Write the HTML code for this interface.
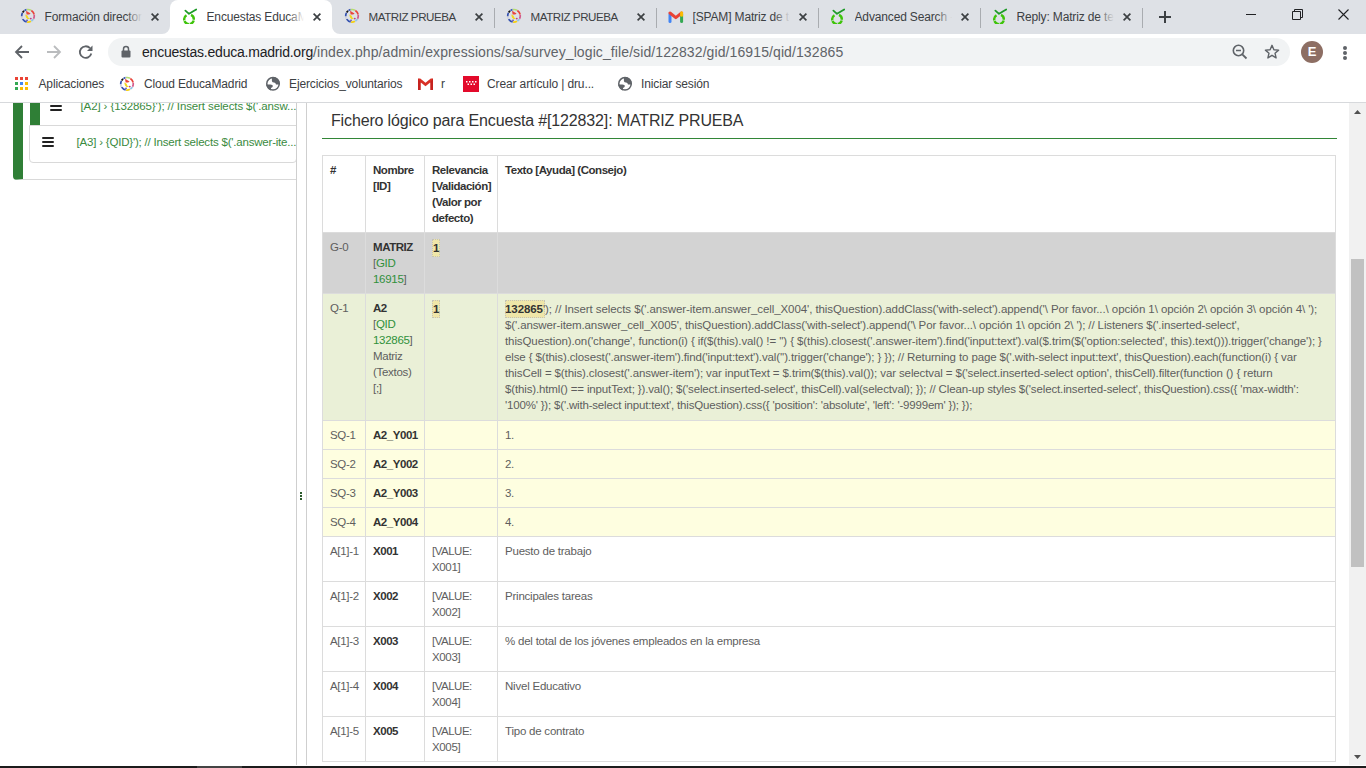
<!DOCTYPE html>
<html><head><meta charset="utf-8">
<style>
*{box-sizing:border-box}
html,body{margin:0;padding:0;width:1366px;height:768px;overflow:hidden;background:#fff;font-family:"Liberation Sans",sans-serif}
.abs{position:absolute}
#tabstrip{position:absolute;left:0;top:0;width:1366px;height:34px;background:#dee1e6}
.tab{position:absolute;top:0;height:34px;width:162px}
.tabt{font-size:12px;color:#3c4043;white-space:nowrap;overflow:hidden}
.tab .t{position:absolute;left:36px;top:10px;font-size:12px;color:#3c4043;white-space:nowrap;overflow:hidden;width:88px}
.tab .x{position:absolute;left:138px;top:11px;width:12px;height:12px}
.tab .fav{position:absolute;left:12px;top:8px;width:16px;height:16px}
.sep{position:absolute;top:8px;width:1px;height:20px;background:#a9acb0}
#active{position:absolute;left:170px;top:0;width:162px;height:34px;background:#fff;border-radius:8px 8px 0 0}
#toolbar{position:absolute;left:0;top:34px;width:1366px;height:68px;background:#fff}
#omni{position:absolute;left:108px;top:38px;width:1182px;height:28px;border-radius:14px;background:#f1f3f4}
#url{position:absolute;left:142px;top:44px;font-size:14px;color:#5f6368;white-space:nowrap}
#url b{font-weight:normal;color:#202124}
.bm{position:absolute;top:77px;font-size:12px;letter-spacing:-0.12px;color:#3c4043;white-space:nowrap}
#chromeline{position:absolute;left:0;top:102px;width:1366px;height:1px;background:#d7d9dc}
#page{position:absolute;left:0;top:103px;width:1350px;height:662px;background:#fff;overflow:hidden;font-family:"Liberation Sans",sans-serif}
#scroll{position:absolute;left:1349px;top:103px;width:17px;height:662px;background:#f1f1f1}
#thumb{position:absolute;left:1351px;top:259px;width:13px;height:308px;background:#c1c1c1}
#taskbar{position:absolute;left:0;top:766px;width:1366px;height:2px;background:#1c1c1c}
.tx{position:absolute;white-space:nowrap;line-height:16px;font-family:"Liberation Sans",sans-serif}
.g{color:#30903b}
.tx b{color:#333}
</style></head><body>
<div id="tabstrip"></div>
<div id="active"></div>
<svg class="abs" style="left:162px;top:26px" width="8" height="8" viewBox="0 0 8 8"><path d="M0 8 A8 8 0 0 0 8 0 L8 8 Z" fill="#fff"/></svg>
<svg class="abs" style="left:332px;top:26px" width="8" height="8" viewBox="0 0 8 8"><path d="M8 8 A8 8 0 0 1 0 0 L0 8 Z" fill="#fff"/></svg>
<svg class="abs" style="left:20px;top:8px" width="16" height="16" viewBox="0 0 16 16"><path d="M6.91 1.60 A6.3 6.3 0 0 1 10.96 2.24" fill="none" stroke="#b5dc70" stroke-width="1.7"/><path d="M11.34 2.46 A6.3 6.3 0 0 1 14.16 6.49" fill="none" stroke="#e8453c" stroke-width="1.7"/><path d="M14.24 6.92 A6.3 6.3 0 0 1 13.56 10.76" fill="none" stroke="#d25a8c" stroke-width="1.7"/><path d="M13.34 11.14 A6.3 6.3 0 0 1 11.34 13.14" fill="none" stroke="#8cc6e6" stroke-width="1.7"/><path d="M10.96 13.36 A6.3 6.3 0 0 1 7.12 14.04" fill="none" stroke="#f5cf10" stroke-width="1.7"/><path d="M6.69 13.96 A6.3 6.3 0 0 1 2.66 11.14" fill="none" stroke="#3552b0" stroke-width="1.7"/><path d="M2.44 10.76 A6.3 6.3 0 0 1 1.76 8.68" fill="none" stroke="#cfd0dc" stroke-width="1.7"/><path d="M1.72 8.24 A6.3 6.3 0 0 1 2.44 4.84" fill="none" stroke="#3552b0" stroke-width="1.7"/><path d="M2.66 4.46 A6.3 6.3 0 0 1 4.12 2.84" fill="none" stroke="#141414" stroke-width="1.7"/><path d="M4.48 2.58 A6.3 6.3 0 0 1 6.48 1.69" fill="none" stroke="#3552b0" stroke-width="1.7"/>
 <path d="M6 2.8 L10.6 5.6 L9.2 6.4 L6.6 6.6 Z" fill="#e8453c"/>
 <path d="M5.2 6.6 L7.4 7.4 L8.6 10 L10.4 10.4 L7.6 11.2 L6 9.6 Z" fill="#f2d820"/>
 <circle cx="10.8" cy="10.6" r="0.9" fill="#b04090"/>
 <circle cx="7" cy="12.4" r="0.8" fill="#6040a0"/>
</svg>
<div class="abs tabt" style="left:44.5px;top:10px;width:98px;letter-spacing:-0.15px">Formación directora</div>
<div class="abs" style="left:126px;top:6px;width:17px;height:22px;background:linear-gradient(90deg,rgba(222,225,230,0),#dee1e6 95%)"></div>
<svg class="abs" style="left:151px;top:13px" width="8" height="8" viewBox="0 0 8 8"><path d="M0.6 0.6L7.4 7.4M7.4 0.6L0.6 7.4" stroke="#3c4043" stroke-width="1.7"/></svg>
<svg class="abs" style="left:181px;top:8px" width="16" height="16" viewBox="0 0 16 16">
 <path d="M10.03 6.95 A4.8 4.8 0 1 1 5.97 6.95" fill="none" stroke="#3ec40a" stroke-width="2.4" stroke-dasharray="5.6 0.7"/>
 <path d="M4.4 2.6 L8 5.8 L15.2 1.4" fill="none" stroke="#1e9a28" stroke-width="1.8" stroke-linecap="round" stroke-linejoin="round"/>
</svg>
<div class="abs tabt" style="left:206.5px;top:10px;width:98px;letter-spacing:-0.15px">Encuestas EducaMadrid</div>
<div class="abs" style="left:288px;top:6px;width:17px;height:22px;background:linear-gradient(90deg,rgba(255,255,255,0),#fff 95%)"></div>
<svg class="abs" style="left:313px;top:13px" width="8" height="8" viewBox="0 0 8 8"><path d="M0.6 0.6L7.4 7.4M7.4 0.6L0.6 7.4" stroke="#3c4043" stroke-width="1.7"/></svg>
<svg class="abs" style="left:344px;top:8px" width="16" height="16" viewBox="0 0 16 16"><path d="M6.91 1.60 A6.3 6.3 0 0 1 10.96 2.24" fill="none" stroke="#b5dc70" stroke-width="1.7"/><path d="M11.34 2.46 A6.3 6.3 0 0 1 14.16 6.49" fill="none" stroke="#e8453c" stroke-width="1.7"/><path d="M14.24 6.92 A6.3 6.3 0 0 1 13.56 10.76" fill="none" stroke="#d25a8c" stroke-width="1.7"/><path d="M13.34 11.14 A6.3 6.3 0 0 1 11.34 13.14" fill="none" stroke="#8cc6e6" stroke-width="1.7"/><path d="M10.96 13.36 A6.3 6.3 0 0 1 7.12 14.04" fill="none" stroke="#f5cf10" stroke-width="1.7"/><path d="M6.69 13.96 A6.3 6.3 0 0 1 2.66 11.14" fill="none" stroke="#3552b0" stroke-width="1.7"/><path d="M2.44 10.76 A6.3 6.3 0 0 1 1.76 8.68" fill="none" stroke="#cfd0dc" stroke-width="1.7"/><path d="M1.72 8.24 A6.3 6.3 0 0 1 2.44 4.84" fill="none" stroke="#3552b0" stroke-width="1.7"/><path d="M2.66 4.46 A6.3 6.3 0 0 1 4.12 2.84" fill="none" stroke="#141414" stroke-width="1.7"/><path d="M4.48 2.58 A6.3 6.3 0 0 1 6.48 1.69" fill="none" stroke="#3552b0" stroke-width="1.7"/>
 <path d="M6 2.8 L10.6 5.6 L9.2 6.4 L6.6 6.6 Z" fill="#e8453c"/>
 <path d="M5.2 6.6 L7.4 7.4 L8.6 10 L10.4 10.4 L7.6 11.2 L6 9.6 Z" fill="#f2d820"/>
 <circle cx="10.8" cy="10.6" r="0.9" fill="#b04090"/>
 <circle cx="7" cy="12.4" r="0.8" fill="#6040a0"/>
</svg>
<div class="abs tabt" style="left:368.5px;top:10px;width:98px;font-size:11.6px;letter-spacing:-0.45px">MATRIZ PRUEBA</div>
<svg class="abs" style="left:475px;top:13px" width="8" height="8" viewBox="0 0 8 8"><path d="M0.6 0.6L7.4 7.4M7.4 0.6L0.6 7.4" stroke="#3c4043" stroke-width="1.7"/></svg>
<div class="sep" style="left:494px"></div>
<svg class="abs" style="left:506px;top:8px" width="16" height="16" viewBox="0 0 16 16"><path d="M6.91 1.60 A6.3 6.3 0 0 1 10.96 2.24" fill="none" stroke="#b5dc70" stroke-width="1.7"/><path d="M11.34 2.46 A6.3 6.3 0 0 1 14.16 6.49" fill="none" stroke="#e8453c" stroke-width="1.7"/><path d="M14.24 6.92 A6.3 6.3 0 0 1 13.56 10.76" fill="none" stroke="#d25a8c" stroke-width="1.7"/><path d="M13.34 11.14 A6.3 6.3 0 0 1 11.34 13.14" fill="none" stroke="#8cc6e6" stroke-width="1.7"/><path d="M10.96 13.36 A6.3 6.3 0 0 1 7.12 14.04" fill="none" stroke="#f5cf10" stroke-width="1.7"/><path d="M6.69 13.96 A6.3 6.3 0 0 1 2.66 11.14" fill="none" stroke="#3552b0" stroke-width="1.7"/><path d="M2.44 10.76 A6.3 6.3 0 0 1 1.76 8.68" fill="none" stroke="#cfd0dc" stroke-width="1.7"/><path d="M1.72 8.24 A6.3 6.3 0 0 1 2.44 4.84" fill="none" stroke="#3552b0" stroke-width="1.7"/><path d="M2.66 4.46 A6.3 6.3 0 0 1 4.12 2.84" fill="none" stroke="#141414" stroke-width="1.7"/><path d="M4.48 2.58 A6.3 6.3 0 0 1 6.48 1.69" fill="none" stroke="#3552b0" stroke-width="1.7"/>
 <path d="M6 2.8 L10.6 5.6 L9.2 6.4 L6.6 6.6 Z" fill="#e8453c"/>
 <path d="M5.2 6.6 L7.4 7.4 L8.6 10 L10.4 10.4 L7.6 11.2 L6 9.6 Z" fill="#f2d820"/>
 <circle cx="10.8" cy="10.6" r="0.9" fill="#b04090"/>
 <circle cx="7" cy="12.4" r="0.8" fill="#6040a0"/>
</svg>
<div class="abs tabt" style="left:530.5px;top:10px;width:98px;font-size:11.6px;letter-spacing:-0.45px">MATRIZ PRUEBA</div>
<svg class="abs" style="left:637px;top:13px" width="8" height="8" viewBox="0 0 8 8"><path d="M0.6 0.6L7.4 7.4M7.4 0.6L0.6 7.4" stroke="#3c4043" stroke-width="1.7"/></svg>
<div class="sep" style="left:656px"></div>
<svg class="abs" style="left:668px;top:11px" width="16" height="12" viewBox="0 0 16 12">
 <path d="M2 10.5 V3" stroke="#4285f4" stroke-width="3" stroke-linecap="round"/>
 <path d="M13.6 10.5 V3.5" stroke="#34a853" stroke-width="3" stroke-linecap="round"/>
 <path d="M2 2 L7.8 6.6 L13.6 2" fill="none" stroke="#ea4335" stroke-width="3" stroke-linecap="round" stroke-linejoin="round"/>
 <path d="M13.6 1.8 V4.2" stroke="#fbbc04" stroke-width="3" stroke-linecap="round"/>
</svg>
<div class="abs tabt" style="left:692.5px;top:10px;width:98px;letter-spacing:-0.15px">[SPAM] Matriz de texto</div>
<div class="abs" style="left:774px;top:6px;width:17px;height:22px;background:linear-gradient(90deg,rgba(222,225,230,0),#dee1e6 95%)"></div>
<svg class="abs" style="left:799px;top:13px" width="8" height="8" viewBox="0 0 8 8"><path d="M0.6 0.6L7.4 7.4M7.4 0.6L0.6 7.4" stroke="#3c4043" stroke-width="1.7"/></svg>
<div class="sep" style="left:818px"></div>
<svg class="abs" style="left:829px;top:8px" width="16" height="16" viewBox="0 0 16 16">
 <path d="M10.03 6.95 A4.8 4.8 0 1 1 5.97 6.95" fill="none" stroke="#3ec40a" stroke-width="2.4" stroke-dasharray="5.6 0.7"/>
 <path d="M4.4 2.6 L8 5.8 L15.2 1.4" fill="none" stroke="#1e9a28" stroke-width="1.8" stroke-linecap="round" stroke-linejoin="round"/>
</svg>
<div class="abs tabt" style="left:854.5px;top:10px;width:98px;letter-spacing:-0.15px">Advanced Search - LimeSurvey</div>
<div class="abs" style="left:936px;top:6px;width:17px;height:22px;background:linear-gradient(90deg,rgba(222,225,230,0),#dee1e6 95%)"></div>
<svg class="abs" style="left:961px;top:13px" width="8" height="8" viewBox="0 0 8 8"><path d="M0.6 0.6L7.4 7.4M7.4 0.6L0.6 7.4" stroke="#3c4043" stroke-width="1.7"/></svg>
<div class="sep" style="left:980px"></div>
<svg class="abs" style="left:991px;top:8px" width="16" height="16" viewBox="0 0 16 16">
 <path d="M10.03 6.95 A4.8 4.8 0 1 1 5.97 6.95" fill="none" stroke="#3ec40a" stroke-width="2.4" stroke-dasharray="5.6 0.7"/>
 <path d="M4.4 2.6 L8 5.8 L15.2 1.4" fill="none" stroke="#1e9a28" stroke-width="1.8" stroke-linecap="round" stroke-linejoin="round"/>
</svg>
<div class="abs tabt" style="left:1016.5px;top:10px;width:98px;letter-spacing:-0.15px">Reply: Matriz de texto</div>
<div class="abs" style="left:1098px;top:6px;width:17px;height:22px;background:linear-gradient(90deg,rgba(222,225,230,0),#dee1e6 95%)"></div>
<svg class="abs" style="left:1123px;top:13px" width="8" height="8" viewBox="0 0 8 8"><path d="M0.6 0.6L7.4 7.4M7.4 0.6L0.6 7.4" stroke="#3c4043" stroke-width="1.7"/></svg>
<div class="sep" style="left:1142px"></div>
<svg class="abs" style="left:1159px;top:11px" width="12" height="12" viewBox="0 0 12 12"><path d="M6 0V12M0 6H12" stroke="#3c4043" stroke-width="2"/></svg>
<svg class="abs" style="left:1246px;top:9px" width="10" height="10" viewBox="0 0 10 10"><path d="M0 5.5H10" stroke="#202124" stroke-width="1"/></svg>
<svg class="abs" style="left:1292px;top:9px" width="11" height="11" viewBox="0 0 11 11"><path d="M0.5 2.5H8.5V10.5H0.5Z M2.5 2.5V0.5H10.5V8.5H8.5" fill="none" stroke="#202124" stroke-width="1"/></svg>
<svg class="abs" style="left:1337.5px;top:9px" width="11" height="11" viewBox="0 0 11 11"><path d="M0.5 0.5L10.5 10.5M10.5 0.5L0.5 10.5" stroke="#202124" stroke-width="1.1"/></svg>
<div id="toolbar"></div>
<svg class="abs" style="left:14px;top:44px" width="16" height="16" viewBox="0 0 16 16"><path d="M15 8H2.5M8 2L2 8L8 14" fill="none" stroke="#5f6368" stroke-width="1.8"/></svg>
<svg class="abs" style="left:46px;top:44px" width="16" height="16" viewBox="0 0 16 16"><path d="M1 8H13.5M8 2L14 8L8 14" fill="none" stroke="#babcbe" stroke-width="1.8"/></svg>
<svg class="abs" style="left:78px;top:44px" width="16" height="16" viewBox="0 0 16 16"><path d="M13.3 9.5 A5.8 5.8 0 1 1 12 4.2" fill="none" stroke="#5f6368" stroke-width="1.8"/><path d="M14.5 1.5V7H9Z" fill="#5f6368"/></svg>
<div id="omni"></div>
<svg class="abs" style="left:121px;top:45px" width="10" height="13" viewBox="0 0 10 13"><path d="M2.5 6V4A2.5 2.5 0 0 1 7.5 4V6" fill="none" stroke="#5f6368" stroke-width="1.5"/><rect x="0.5" y="5.5" width="9" height="7" rx="1" fill="#5f6368"/></svg>
<div id="url"><b style="letter-spacing:-0.22px">encuestas.educa.madrid.org</b><span style="letter-spacing:0.1px">/index.php/admin/expressions/sa/survey_logic_file/sid/122832/gid/16915/qid/132865</span></div>
<svg class="abs" style="left:1232px;top:44px" width="16" height="16" viewBox="0 0 16 16"><circle cx="6.5" cy="6.5" r="5.2" fill="none" stroke="#5f6368" stroke-width="1.6"/><path d="M10.3 10.3L14.5 14.5" stroke="#5f6368" stroke-width="1.8"/><path d="M4 6.5H9" stroke="#5f6368" stroke-width="1.5"/></svg>
<svg class="abs" style="left:1264px;top:44px" width="16" height="16" viewBox="0 0 16 16"><path d="M8 1.3L9.9 5.8L14.6 6.1L11 9.2L12.1 13.9L8 11.3L3.9 13.9L5 9.2L1.4 6.1L6.1 5.8Z" fill="none" stroke="#5f6368" stroke-width="1.4" stroke-linejoin="round"/></svg>
<div class="abs" style="left:1301px;top:41px;width:22px;height:22px;border-radius:50%;background:#8d6e63"></div>
<div class="abs" style="left:1301px;top:44px;width:22px;text-align:center;font-size:13px;font-weight:bold;color:#fff;line-height:16px">E</div>
<div class="abs" style="left:1343px;top:46px;width:4px;height:4px;border-radius:50%;background:#5f6368"></div>
<div class="abs" style="left:1343px;top:51px;width:4px;height:4px;border-radius:50%;background:#5f6368"></div>
<div class="abs" style="left:1343px;top:56px;width:4px;height:4px;border-radius:50%;background:#5f6368"></div>
<svg class="abs" style="left:15px;top:77px" width="14" height="14" viewBox="0 0 14 14">
 <rect x="0" y="0" width="3" height="3" fill="#ea4335"/><rect x="5" y="0" width="3" height="3" fill="#ea4335"/><rect x="10" y="0" width="3" height="3" fill="#ea4335"/>
 <rect x="0" y="5" width="3" height="3" fill="#34a853"/><rect x="5" y="5" width="3" height="3" fill="#4285f4"/><rect x="10" y="5" width="3" height="3" fill="#fbbc04"/>
 <rect x="0" y="10" width="3" height="3" fill="#34a853"/><rect x="5" y="10" width="3" height="3" fill="#fbbc04"/><rect x="10" y="10" width="3" height="3" fill="#fbbc04"/>
</svg>
<div class="bm" style="left:38.5px;letter-spacing:-0.15px">Aplicaciones</div>
<svg class="abs" style="left:119px;top:76px" width="16" height="16" viewBox="0 0 16 16"><path d="M6.91 1.60 A6.3 6.3 0 0 1 10.96 2.24" fill="none" stroke="#b5dc70" stroke-width="1.7"/><path d="M11.34 2.46 A6.3 6.3 0 0 1 14.16 6.49" fill="none" stroke="#e8453c" stroke-width="1.7"/><path d="M14.24 6.92 A6.3 6.3 0 0 1 13.56 10.76" fill="none" stroke="#d25a8c" stroke-width="1.7"/><path d="M13.34 11.14 A6.3 6.3 0 0 1 11.34 13.14" fill="none" stroke="#8cc6e6" stroke-width="1.7"/><path d="M10.96 13.36 A6.3 6.3 0 0 1 7.12 14.04" fill="none" stroke="#f5cf10" stroke-width="1.7"/><path d="M6.69 13.96 A6.3 6.3 0 0 1 2.66 11.14" fill="none" stroke="#3552b0" stroke-width="1.7"/><path d="M2.44 10.76 A6.3 6.3 0 0 1 1.76 8.68" fill="none" stroke="#cfd0dc" stroke-width="1.7"/><path d="M1.72 8.24 A6.3 6.3 0 0 1 2.44 4.84" fill="none" stroke="#3552b0" stroke-width="1.7"/><path d="M2.66 4.46 A6.3 6.3 0 0 1 4.12 2.84" fill="none" stroke="#141414" stroke-width="1.7"/><path d="M4.48 2.58 A6.3 6.3 0 0 1 6.48 1.69" fill="none" stroke="#3552b0" stroke-width="1.7"/>
 <path d="M6 2.8 L10.6 5.6 L9.2 6.4 L6.6 6.6 Z" fill="#e8453c"/>
 <path d="M5.2 6.6 L7.4 7.4 L8.6 10 L10.4 10.4 L7.6 11.2 L6 9.6 Z" fill="#f2d820"/>
 <circle cx="10.8" cy="10.6" r="0.9" fill="#b04090"/>
 <circle cx="7" cy="12.4" r="0.8" fill="#6040a0"/>
</svg>
<div class="bm" style="left:144px">Cloud EducaMadrid</div>
<svg class="abs" style="left:265px;top:76px" width="16" height="16" viewBox="0 0 16 16"><clipPath id="gc265"><circle cx="8" cy="7.8" r="6.9"/></clipPath><circle cx="8" cy="7.8" r="6.25" fill="none" stroke="#5f6368" stroke-width="1.5"/><g clip-path="url(#gc265)" fill="#5f6368"><path d="M6.9 0 L6.9 5.2 Q7.4 6.6 9 6.6 Q10.6 6.7 11 8.4 L16 8.4 L16 0 Z"/><path d="M0 8.4 L5.4 8.4 Q7.9 8.7 7.9 10.1 Q7.6 11.6 6 12 L5.8 16 L0 16 Z"/></g></svg>
<div class="bm" style="left:289px">Ejercicios_voluntarios</div>
<svg class="abs" style="left:418px;top:78px" width="15" height="12" viewBox="0 0 15 12"><path d="M0 0.5H2.2L7.5 4.8L12.8 0.5H15V12H12.5V4.2L7.5 8.2L2.5 4.2V12H0Z" fill="#d93025"/><path d="M2.5 4.2V12H0V0.5Z" fill="#c5221f"/><path d="M12.5 4.2V12H15V0.5Z" fill="#c5221f"/></svg>
<div class="bm" style="left:441px">r</div>
<div class="abs" style="left:463px;top:76px;width:16px;height:16px;background:#e30a2b"></div>
<svg class="abs" style="left:465px;top:81px" width="12" height="6" viewBox="0 0 12 6"><g fill="#fff"><rect x="1" y="0" width="1.5" height="1.5"/><rect x="4" y="0" width="1.5" height="1.5"/><rect x="7" y="0" width="1.5" height="1.5"/><rect x="10" y="0" width="1.5" height="1.5"/><rect x="2.5" y="2.5" width="1.5" height="1.5"/><rect x="5.5" y="2.5" width="1.5" height="1.5"/><rect x="8.5" y="2.5" width="1.5" height="1.5"/></g></svg>
<div class="bm" style="left:487px">Crear artículo | dru...</div>
<svg class="abs" style="left:617px;top:76px" width="16" height="16" viewBox="0 0 16 16"><clipPath id="gc617"><circle cx="8" cy="7.8" r="6.9"/></clipPath><circle cx="8" cy="7.8" r="6.25" fill="none" stroke="#5f6368" stroke-width="1.5"/><g clip-path="url(#gc617)" fill="#5f6368"><path d="M6.9 0 L6.9 5.2 Q7.4 6.6 9 6.6 Q10.6 6.7 11 8.4 L16 8.4 L16 0 Z"/><path d="M0 8.4 L5.4 8.4 Q7.9 8.7 7.9 10.1 Q7.6 11.6 6 12 L5.8 16 L0 16 Z"/></g></svg>
<div class="bm" style="left:641px">Iniciar sesión</div>
<div id="chromeline"></div>

<div id="page"></div>
<!--PAGE--><div style="position:absolute;left:0;top:0;width:1366px;height:765px;clip-path:inset(103px 0 0 0)">
<div class="abs" style="left:300px;top:491.5px;width:2px;height:2px;background:#2b5b2b"></div>
<div class="abs" style="left:300px;top:494.8px;width:2px;height:2px;background:#2b5b2b"></div>
<div class="abs" style="left:300px;top:498.1px;width:2px;height:2px;background:#2b5b2b"></div>
<div class="abs" style="left:13px;top:92px;width:284px;height:88px;border-bottom:1px solid #d9d9d9;border-left:10px solid #2f7f36;border-radius:0 0 0 4px;background:#fff"></div>
<div class="abs" style="left:30px;top:80px;width:267px;height:45px;border-left:10px solid #2f7f36;background:#fff"></div>
<div class="abs" style="left:29px;top:125px;width:268px;height:38px;border:1px solid #d9d9d9;border-radius:0 0 4px 4px;background:#fff"></div>
<div class="abs" style="left:50px;top:101.1px;width:12px;height:1.8px;background:#222;border-radius:1px"></div>
<div class="abs" style="left:50px;top:105.1px;width:12px;height:1.8px;background:#222;border-radius:1px"></div>
<div class="abs" style="left:50px;top:109.1px;width:12px;height:1.8px;background:#222;border-radius:1px"></div>
<div class="abs" style="left:42px;top:137px;width:12px;height:1.8px;background:#222;border-radius:1px"></div>
<div class="abs" style="left:42px;top:141.2px;width:12px;height:1.8px;background:#222;border-radius:1px"></div>
<div class="abs" style="left:42px;top:145.2px;width:12px;height:1.8px;background:#222;border-radius:1px"></div>
<div class="tx" style="left:80.5px;top:98.02px;font-size:11.5px;font-weight:normal;color:#3a8a3e;letter-spacing:-0.11px">[A2] › {132865}'); // Insert selects $('.answ...</div>
<div class="tx" style="left:76.5px;top:134.02px;font-size:11.5px;font-weight:normal;color:#3a8a3e;letter-spacing:-0.2px">[A3] › {QID}'); // Insert selects $('.answer-ite...</div>
<div class="abs" style="left:0px;top:102px;width:296px;height:0px;background:#fff"></div>
<div class="abs" style="left:296px;top:103px;width:1px;height:662px;background:#cfcfcf"></div>
<div class="abs" style="left:306px;top:103px;width:1px;height:662px;background:#cfcfcf"></div>
<div class="tx" style="left:331px;top:113.16px;font-size:16px;font-weight:normal;color:#333;letter-spacing:-0.15px">Fichero lógico para Encuesta #[122832]: MATRIZ PRUEBA</div>
<div class="abs" style="left:322px;top:138px;width:1015px;height:1px;background:#328637"></div>
<div class="abs" style="left:322px;top:232px;width:1013px;height:61px;background:#d3d3d3"></div>
<div class="abs" style="left:322px;top:293px;width:1013px;height:127px;background:#eaf0d7"></div>
<div class="abs" style="left:322px;top:420px;width:1013px;height:116px;background:#fefee0"></div>
<div class="abs" style="left:322px;top:155px;width:1014px;height:1px;background:#dcdcdc"></div>
<div class="abs" style="left:322px;top:232px;width:1014px;height:1px;background:#dcdcdc"></div>
<div class="abs" style="left:322px;top:293px;width:1014px;height:1px;background:#dcdcdc"></div>
<div class="abs" style="left:322px;top:420px;width:1014px;height:1px;background:#dcdcdc"></div>
<div class="abs" style="left:322px;top:449px;width:1014px;height:1px;background:#dcdcdc"></div>
<div class="abs" style="left:322px;top:478px;width:1014px;height:1px;background:#dcdcdc"></div>
<div class="abs" style="left:322px;top:507px;width:1014px;height:1px;background:#dcdcdc"></div>
<div class="abs" style="left:322px;top:536px;width:1014px;height:1px;background:#dcdcdc"></div>
<div class="abs" style="left:322px;top:581px;width:1014px;height:1px;background:#dcdcdc"></div>
<div class="abs" style="left:322px;top:626px;width:1014px;height:1px;background:#dcdcdc"></div>
<div class="abs" style="left:322px;top:671px;width:1014px;height:1px;background:#dcdcdc"></div>
<div class="abs" style="left:322px;top:716px;width:1014px;height:1px;background:#dcdcdc"></div>
<div class="abs" style="left:322px;top:761px;width:1014px;height:1px;background:#dcdcdc"></div>
<div class="abs" style="left:322px;top:155px;width:1px;height:607px;background:#dcdcdc"></div>
<div class="abs" style="left:365px;top:155px;width:1px;height:607px;background:#dcdcdc"></div>
<div class="abs" style="left:424px;top:155px;width:1px;height:607px;background:#dcdcdc"></div>
<div class="abs" style="left:497px;top:155px;width:1px;height:607px;background:#dcdcdc"></div>
<div class="abs" style="left:1335px;top:155px;width:1px;height:607px;background:#dcdcdc"></div>
<div class="tx" style="left:330px;top:162.02px;font-size:11.5px;font-weight:bold;color:#333;letter-spacing:-0.45px">#</div>
<div class="tx" style="left:373px;top:162.02px;font-size:11.5px;font-weight:bold;color:#333;letter-spacing:-0.45px">Nombre</div>
<div class="tx" style="left:373px;top:178.02px;font-size:11.5px;font-weight:bold;color:#333;letter-spacing:-0.45px">[ID]</div>
<div class="tx" style="left:432px;top:162.02px;font-size:11.5px;font-weight:bold;color:#333;letter-spacing:-0.45px">Relevancia</div>
<div class="tx" style="left:432px;top:178.02px;font-size:11.5px;font-weight:bold;color:#333;letter-spacing:-0.45px">[Validación]</div>
<div class="tx" style="left:432px;top:194.02px;font-size:11.5px;font-weight:bold;color:#333;letter-spacing:-0.45px">(Valor por</div>
<div class="tx" style="left:432px;top:210.02px;font-size:11.5px;font-weight:bold;color:#333;letter-spacing:-0.45px">defecto)</div>
<div class="tx" style="left:505px;top:162.02px;font-size:11.5px;font-weight:bold;color:#333;letter-spacing:-0.45px">Texto [Ayuda] (Consejo)</div>
<div class="tx" style="left:330px;top:239.02px;font-size:11.5px;font-weight:normal;color:#5e5e5e;letter-spacing:-0.3px">G-0</div>
<div class="tx" style="left:373px;top:239.02px;font-size:11.5px;font-weight:bold;color:#333;letter-spacing:-0.45px">MATRIZ</div>
<div class="tx" style="left:373px;top:255.02px;font-size:11.5px;font-weight:normal;color:#5e5e5e;letter-spacing:-0.3px">[<span class="g">GID</span></div>
<div class="tx" style="left:373px;top:271.02px;font-size:11.5px;font-weight:normal;color:#5e5e5e;letter-spacing:-0.3px"><span class="g">16915</span>]</div>
<div class="abs" style="left:432px;top:239px;width:8px;height:18px;background:#efe6a8;outline:1px dotted #c4c2b8;outline-offset:-1px"></div>
<div class="tx" style="left:433px;top:239.62px;font-size:11.5px;font-weight:bold;color:#333">1</div>
<div class="tx" style="left:330px;top:300.02px;font-size:11.5px;font-weight:normal;color:#5e5e5e;letter-spacing:-0.3px">Q-1</div>
<div class="tx" style="left:373px;top:300.02px;font-size:11.5px;font-weight:bold;color:#333;letter-spacing:-0.45px">A2</div>
<div class="tx" style="left:373px;top:316.02px;font-size:11.5px;font-weight:normal;color:#5e5e5e;letter-spacing:-0.3px">[<span class="g">QID</span></div>
<div class="tx" style="left:373px;top:332.02px;font-size:11.5px;font-weight:normal;color:#5e5e5e;letter-spacing:-0.3px"><span class="g">132865</span>]</div>
<div class="tx" style="left:373px;top:348.02px;font-size:11.5px;font-weight:normal;color:#5e5e5e;letter-spacing:-0.3px">Matriz</div>
<div class="tx" style="left:373px;top:364.02px;font-size:11.5px;font-weight:normal;color:#5e5e5e;letter-spacing:-0.3px">(Textos)</div>
<div class="tx" style="left:373px;top:380.02px;font-size:11.5px;font-weight:normal;color:#5e5e5e;letter-spacing:-0.3px">[;]</div>
<div class="abs" style="left:432px;top:300px;width:8px;height:18px;background:#efe6a8;outline:1px dotted #c4c2b8;outline-offset:-1px"></div>
<div class="tx" style="left:433px;top:300.62px;font-size:11.5px;font-weight:bold;color:#333">1</div>
<div class="abs" style="left:505px;top:300px;width:40px;height:18px;background:#efe6a8;outline:1px dotted #c4c2b8;outline-offset:-1px"></div>
<!--FIT 812.2-->
<div class="tx" style="left:505px;top:301.42px;font-size:11.5px;font-weight:normal;color:#5e5e5e;letter-spacing:-0.078px"><b>132865</b>'); // Insert selects $('.answer-item.answer_cell_X004', thisQuestion).addClass('with-select').append('\ Por favor...\ opción 1\ opción 2\ opción 3\ opción 4\ ');</div>
<!--FIT 734.8-->
<div class="tx" style="left:505px;top:317.42px;font-size:11.5px;font-weight:normal;color:#5e5e5e;letter-spacing:-0.116px">$('.answer-item.answer_cell_X005', thisQuestion).addClass('with-select').append('\ Por favor...\ opción 1\ opción 2\ '); // Listeners $('.inserted-select',</div>
<!--FIT 816.9-->
<div class="tx" style="left:505px;top:333.42px;font-size:11.5px;font-weight:normal;color:#5e5e5e;letter-spacing:-0.099px">thisQuestion).on('change', function(i) { if($(this).val() != '') { $(this).closest('.answer-item').find('input:text').val($.trim($('option:selected', this).text())).trigger('change'); }</div>
<!--FIT 791.9-->
<div class="tx" style="left:505px;top:349.42px;font-size:11.5px;font-weight:normal;color:#5e5e5e;letter-spacing:-0.118px">else { $(this).closest('.answer-item').find('input:text').val('').trigger('change'); } }); // Returning to page $('.with-select input:text', thisQuestion).each(function(i) { var</div>
<!--FIT 767.7-->
<div class="tx" style="left:505px;top:365.42px;font-size:11.5px;font-weight:normal;color:#5e5e5e;letter-spacing:-0.113px">thisCell = $(this).closest('.answer-item'); var inputText = $.trim($(this).val()); var selectval = $('select.inserted-select option', thisCell).filter(function () { return</div>
<!--FIT 793.8-->
<div class="tx" style="left:505px;top:381.42px;font-size:11.5px;font-weight:normal;color:#5e5e5e;letter-spacing:-0.137px">$(this).html() == inputText; }).val(); $('select.inserted-select', thisCell).val(selectval); }); // Clean-up styles $('select.inserted-select', thisQuestion).css({ 'max-width':</div>
<!--FIT 467.3-->
<div class="tx" style="left:505px;top:397.42px;font-size:11.5px;font-weight:normal;color:#5e5e5e;letter-spacing:-0.184px">'100%' }); $('.with-select input:text', thisQuestion).css({ 'position': 'absolute', 'left': '-9999em' }); });</div>
<div class="tx" style="left:330px;top:427.02px;font-size:11.5px;font-weight:normal;color:#5e5e5e;letter-spacing:-0.3px">SQ-1</div>
<div class="tx" style="left:373px;top:427.02px;font-size:11.5px;font-weight:bold;color:#333;letter-spacing:-0.45px">A2_Y001</div>
<div class="tx" style="left:505px;top:427.02px;font-size:11.5px;font-weight:normal;color:#5e5e5e;letter-spacing:-0.3px">1.</div>
<div class="tx" style="left:330px;top:456.02px;font-size:11.5px;font-weight:normal;color:#5e5e5e;letter-spacing:-0.3px">SQ-2</div>
<div class="tx" style="left:373px;top:456.02px;font-size:11.5px;font-weight:bold;color:#333;letter-spacing:-0.45px">A2_Y002</div>
<div class="tx" style="left:505px;top:456.02px;font-size:11.5px;font-weight:normal;color:#5e5e5e;letter-spacing:-0.3px">2.</div>
<div class="tx" style="left:330px;top:485.02px;font-size:11.5px;font-weight:normal;color:#5e5e5e;letter-spacing:-0.3px">SQ-3</div>
<div class="tx" style="left:373px;top:485.02px;font-size:11.5px;font-weight:bold;color:#333;letter-spacing:-0.45px">A2_Y003</div>
<div class="tx" style="left:505px;top:485.02px;font-size:11.5px;font-weight:normal;color:#5e5e5e;letter-spacing:-0.3px">3.</div>
<div class="tx" style="left:330px;top:514.02px;font-size:11.5px;font-weight:normal;color:#5e5e5e;letter-spacing:-0.3px">SQ-4</div>
<div class="tx" style="left:373px;top:514.02px;font-size:11.5px;font-weight:bold;color:#333;letter-spacing:-0.45px">A2_Y004</div>
<div class="tx" style="left:505px;top:514.02px;font-size:11.5px;font-weight:normal;color:#5e5e5e;letter-spacing:-0.3px">4.</div>
<div class="tx" style="left:330px;top:543.02px;font-size:11.5px;font-weight:normal;color:#5e5e5e;letter-spacing:-0.3px">A[1]-1</div>
<div class="tx" style="left:373px;top:543.02px;font-size:11.5px;font-weight:bold;color:#333;letter-spacing:-0.45px">X001</div>
<div class="tx" style="left:432px;top:543.02px;font-size:11.5px;font-weight:normal;color:#5e5e5e;letter-spacing:-0.5px">[VALUE:</div>
<div class="tx" style="left:432px;top:559.02px;font-size:11.5px;font-weight:normal;color:#5e5e5e;letter-spacing:-0.35px">X001]</div>
<div class="tx" style="left:505px;top:543.02px;font-size:11.5px;font-weight:normal;color:#5e5e5e;letter-spacing:-0.22px">Puesto de trabajo</div>
<div class="tx" style="left:330px;top:588.02px;font-size:11.5px;font-weight:normal;color:#5e5e5e;letter-spacing:-0.3px">A[1]-2</div>
<div class="tx" style="left:373px;top:588.02px;font-size:11.5px;font-weight:bold;color:#333;letter-spacing:-0.45px">X002</div>
<div class="tx" style="left:432px;top:588.02px;font-size:11.5px;font-weight:normal;color:#5e5e5e;letter-spacing:-0.5px">[VALUE:</div>
<div class="tx" style="left:432px;top:604.02px;font-size:11.5px;font-weight:normal;color:#5e5e5e;letter-spacing:-0.35px">X002]</div>
<div class="tx" style="left:505px;top:588.02px;font-size:11.5px;font-weight:normal;color:#5e5e5e;letter-spacing:-0.22px">Principales tareas</div>
<div class="tx" style="left:330px;top:633.02px;font-size:11.5px;font-weight:normal;color:#5e5e5e;letter-spacing:-0.3px">A[1]-3</div>
<div class="tx" style="left:373px;top:633.02px;font-size:11.5px;font-weight:bold;color:#333;letter-spacing:-0.45px">X003</div>
<div class="tx" style="left:432px;top:633.02px;font-size:11.5px;font-weight:normal;color:#5e5e5e;letter-spacing:-0.5px">[VALUE:</div>
<div class="tx" style="left:432px;top:649.02px;font-size:11.5px;font-weight:normal;color:#5e5e5e;letter-spacing:-0.35px">X003]</div>
<div class="tx" style="left:505px;top:633.02px;font-size:11.5px;font-weight:normal;color:#5e5e5e;letter-spacing:-0.22px">% del total de los jóvenes empleados en la empresa</div>
<div class="tx" style="left:330px;top:678.02px;font-size:11.5px;font-weight:normal;color:#5e5e5e;letter-spacing:-0.3px">A[1]-4</div>
<div class="tx" style="left:373px;top:678.02px;font-size:11.5px;font-weight:bold;color:#333;letter-spacing:-0.45px">X004</div>
<div class="tx" style="left:432px;top:678.02px;font-size:11.5px;font-weight:normal;color:#5e5e5e;letter-spacing:-0.5px">[VALUE:</div>
<div class="tx" style="left:432px;top:694.02px;font-size:11.5px;font-weight:normal;color:#5e5e5e;letter-spacing:-0.35px">X004]</div>
<div class="tx" style="left:505px;top:678.02px;font-size:11.5px;font-weight:normal;color:#5e5e5e;letter-spacing:-0.22px">Nivel Educativo</div>
<div class="tx" style="left:330px;top:723.02px;font-size:11.5px;font-weight:normal;color:#5e5e5e;letter-spacing:-0.3px">A[1]-5</div>
<div class="tx" style="left:373px;top:723.02px;font-size:11.5px;font-weight:bold;color:#333;letter-spacing:-0.45px">X005</div>
<div class="tx" style="left:432px;top:723.02px;font-size:11.5px;font-weight:normal;color:#5e5e5e;letter-spacing:-0.5px">[VALUE:</div>
<div class="tx" style="left:432px;top:739.02px;font-size:11.5px;font-weight:normal;color:#5e5e5e;letter-spacing:-0.35px">X005]</div>
<div class="tx" style="left:505px;top:723.02px;font-size:11.5px;font-weight:normal;color:#5e5e5e;letter-spacing:-0.22px">Tipo de contrato</div>
</div><!--/PAGE-->
<div id="scroll"></div>
<div id="thumb"></div>
<svg class="abs" style="left:1354px;top:110px" width="7" height="4" viewBox="0 0 7 4"><path d="M3.5 0L7 4H0Z" fill="#505050"/></svg>
<svg class="abs" style="left:1354px;top:755px" width="7" height="4" viewBox="0 0 7 4"><path d="M0 0H7L3.5 4Z" fill="#505050"/></svg>
<div id="taskbar"></div>
<div class="abs" style="left:197px;top:766px;width:45px;height:2px;background:#444"></div>
</body></html>
